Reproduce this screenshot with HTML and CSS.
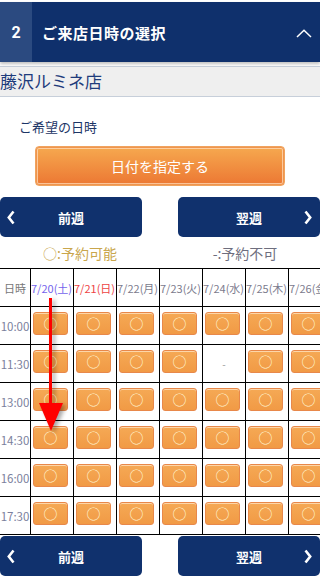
FILE: index.html
```html
<!DOCTYPE html>
<html lang="ja">
<head>
<meta charset="utf-8">
<link rel="stylesheet" href="styles.css">
</head>
<body>
<div class="page">
  <header class="step-head">
    <div class="step-num">2</div>
    <div class="step-title">ご来店日時の選択</div>
    <svg class="step-toggle" width="16" height="9" viewBox="0 0 16 9"><polyline points="1,8 8,1.2 15,8" fill="none" stroke="#fff" stroke-width="1.5"/></svg>
  </header>

  <div class="store">藤沢ルミネ店</div>

  <div class="label">ご希望の日時</div>

  <div class="date-btn-wrap"><button class="date-btn">日付を指定する</button></div>

  <nav class="week-nav">
    <a class="week-btn prev"><svg class="chev" width="8" height="15" viewBox="0 0 8 15"><polyline points="6.5,1.5 1.8,7.5 6.5,13.5" fill="none" stroke="#fff" stroke-width="2.6"/></svg>前週</a>
    <a class="week-btn next">翌週<svg class="chev" width="8" height="15" viewBox="0 0 8 15"><polyline points="1.5,1.5 6.2,7.5 1.5,13.5" fill="none" stroke="#fff" stroke-width="2.6"/></svg></a>
  </nav>

  <div class="legend">
    <span class="ok">○:予約可能</span>
    <span class="ng">-:予約不可</span>
  </div>

  <div class="grid-wrap">
    <div class="grid">
      <div class="cell head">日時</div>
      <div class="cell head sat">7/20(土)</div>
      <div class="cell head sun">7/21(日)</div>
      <div class="cell head">7/22(月)</div>
      <div class="cell head">7/23(火)</div>
      <div class="cell head">7/24(水)</div>
      <div class="cell head">7/25(木)</div>
      <div class="cell head">7/26(金)</div>

      <div class="cell time">10:00</div>
      <div class="cell slot"><span class="sb">○</span></div>
      <div class="cell slot"><span class="sb">○</span></div>
      <div class="cell slot"><span class="sb">○</span></div>
      <div class="cell slot"><span class="sb">○</span></div>
      <div class="cell slot"><span class="sb">○</span></div>
      <div class="cell slot"><span class="sb">○</span></div>
      <div class="cell slot"><span class="sb">○</span></div>

      <div class="cell time">11:30</div>
      <div class="cell slot"><span class="sb">○</span></div>
      <div class="cell slot"><span class="sb">○</span></div>
      <div class="cell slot"><span class="sb">○</span></div>
      <div class="cell slot"><span class="sb">○</span></div>
      <div class="cell none">-</div>
      <div class="cell slot"><span class="sb">○</span></div>
      <div class="cell slot"><span class="sb">○</span></div>

      <div class="cell time">13:00</div>
      <div class="cell slot"><span class="sb">○</span></div>
      <div class="cell slot"><span class="sb">○</span></div>
      <div class="cell slot"><span class="sb">○</span></div>
      <div class="cell slot"><span class="sb">○</span></div>
      <div class="cell slot"><span class="sb">○</span></div>
      <div class="cell slot"><span class="sb">○</span></div>
      <div class="cell slot"><span class="sb">○</span></div>

      <div class="cell time">14:30</div>
      <div class="cell slot"><span class="sb">○</span></div>
      <div class="cell slot"><span class="sb">○</span></div>
      <div class="cell slot"><span class="sb">○</span></div>
      <div class="cell slot"><span class="sb">○</span></div>
      <div class="cell slot"><span class="sb">○</span></div>
      <div class="cell slot"><span class="sb">○</span></div>
      <div class="cell slot"><span class="sb">○</span></div>

      <div class="cell time">16:00</div>
      <div class="cell slot"><span class="sb">○</span></div>
      <div class="cell slot"><span class="sb">○</span></div>
      <div class="cell slot"><span class="sb">○</span></div>
      <div class="cell slot"><span class="sb">○</span></div>
      <div class="cell slot"><span class="sb">○</span></div>
      <div class="cell slot"><span class="sb">○</span></div>
      <div class="cell slot"><span class="sb">○</span></div>

      <div class="cell time">17:30</div>
      <div class="cell slot"><span class="sb">○</span></div>
      <div class="cell slot"><span class="sb">○</span></div>
      <div class="cell slot"><span class="sb">○</span></div>
      <div class="cell slot"><span class="sb">○</span></div>
      <div class="cell slot"><span class="sb">○</span></div>
      <div class="cell slot"><span class="sb">○</span></div>
      <div class="cell slot"><span class="sb">○</span></div>
    </div>
    <svg class="arrow" width="40" height="140" viewBox="0 0 40 140">
      <g>
        <rect x="13" y="0" width="3" height="108" fill="#ff0000"/>
        <polygon points="3,105 27,105 15,133" fill="#ff0000"/>
      </g>
    </svg>
  </div>

  <nav class="week-nav bottom">
    <a class="week-btn prev"><svg class="chev" width="8" height="15" viewBox="0 0 8 15"><polyline points="6.5,1.5 1.8,7.5 6.5,13.5" fill="none" stroke="#fff" stroke-width="2.6"/></svg>前週</a>
    <a class="week-btn next">翌週<svg class="chev" width="8" height="15" viewBox="0 0 8 15"><polyline points="1.5,1.5 6.2,7.5 1.5,13.5" fill="none" stroke="#fff" stroke-width="2.6"/></svg></a>
  </nav>
</div>
</body>
</html>
```

FILE: styles.css
```css
* { box-sizing: border-box; }
html, body { margin: 0; padding: 0; background: #fff; }
body {
  font-family: "Noto Sans CJK JP", "Noto Sans", sans-serif;
  width: 320px;
  height: 578px;
  overflow: hidden;
}
.page { padding-top: 2px; }

.step-head {
  height: 60px;
  background: #0f306c;
  display: flex;
  align-items: center;
  color: #fff;
  box-shadow: 0 2px 3px rgba(0,0,0,0.25);
  position: relative;
}
.step-num {
  width: 32px;
  height: 100%;
  background: #2b4a80;
  display: flex;
  align-items: center;
  justify-content: center;
  font-family: "Roboto", "Noto Sans", sans-serif;
  font-weight: 700;
  font-size: 16px;
}
.step-title {
  margin-left: 10px;
  font-weight: 700;
  font-size: 15px;
  letter-spacing: 0.5px;
  flex: 1;
}
.step-toggle { margin-right: 8px; margin-top: 2px; }

.store {
  margin-top: 4px;
  height: 31px;
  background: #efefef;
  border-top: 1px solid #c7cfda;
  border-bottom: 1px solid #c7cfda;
  color: #1f3c7c;
  font-size: 17px;
  line-height: 28px;
  padding-left: 0;
  white-space: nowrap;
}

.label {
  margin-top: 21px;
  padding-left: 19px;
  font-size: 13px;
  line-height: 18px;
  color: #1c3566;
}

.date-btn-wrap {
  margin-top: 10px;
  padding: 0 35px;
}
.date-btn {
  display: block;
  width: 250px;
  height: 40px;
  border: 1px solid #f0a35e;
  border-radius: 4px;
  background: linear-gradient(#f6a94f, #ec7733);
  box-shadow: inset 0 0 0 1px #ef954f, inset 0 0 0 2px rgba(255,220,185,0.75);
  color: #fff;
  font-family: "Noto Sans CJK JP", sans-serif;
  font-size: 14px;
  padding: 0;
}

.week-nav {
  margin-top: 11px;
  display: flex;
  justify-content: space-between;
}
.week-nav.bottom { margin-top: 1px; }
.week-btn {
  width: 142px;
  height: 40px;
  background: #10316d;
  border-radius: 5px;
  color: #fff;
  font-weight: 700;
  font-size: 13px;
  display: flex;
  align-items: center;
  justify-content: center;
  position: relative;
}
.week-btn .chev { position: absolute; top: 13px; }
.week-btn.prev .chev { left: 7px; }
.week-btn.next .chev { right: 8px; }

.legend {
  height: 31px;
  display: flex;
  align-items: center;
  font-size: 14px;
}
.legend span { width: 160px; text-align: center; }
.legend .ok { color: #c9a64c; }
.legend .ng { color: #6e6e7e; padding-left: 10px; }

.grid-wrap { position: relative; width: 320px; overflow: hidden; }
.grid {
  display: grid;
  grid-template-columns: 31px repeat(7, 43px);
  grid-auto-rows: 38px;
  width: 332px;
  border-top: 1px solid #000;
}
.cell {
  border-right: 1px solid #000;
  border-bottom: 1px solid #000;
  display: flex;
  align-items: center;
  justify-content: center;
  white-space: nowrap;
  overflow: hidden;
}
.head { font-size: 11px; color: #7b7b8d; justify-content: flex-start; padding-left: 0; }
.head:first-child { justify-content: center; color: #777; }
.head.sat { color: #7464ec; }
.head.sun { color: #ee4343; }
.time { font-size: 11.5px; color: #7b7f9d; }
.none { font-size: 10px; color: #999; }
.slot { align-items: flex-start; justify-content: flex-start; padding: 5px 0 0 2px; }
.sb {
  width: 35px;
  height: 23px;
  border: 1px solid #e8884a;
  border-radius: 3px;
  background: linear-gradient(#f5a955, #f19a45);
  box-shadow: inset 0 1px 0 rgba(255,225,190,0.8);
  color: #fff6d6;
  font-size: 14px;
  line-height: 21px;
  text-align: center;
}

.arrow {
  position: absolute;
  left: 36px;
  top: 30px;
  filter: drop-shadow(3px 2px 2px rgba(0,0,0,0.35));
}
```
